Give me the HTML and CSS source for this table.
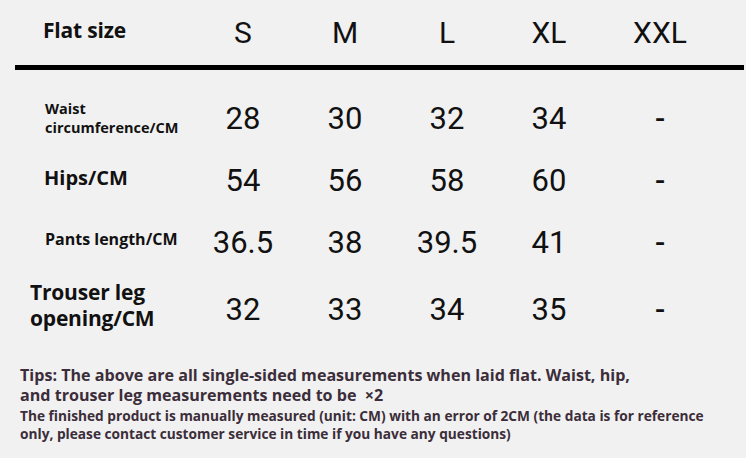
FILE: index.html
```html
<!DOCTYPE html>
<html>
<head>
<meta charset="utf-8">
<link rel="stylesheet" href="styles.css">
</head>
<body>
<div class="page">
  <div class="grid head">
    <div class="label flat">Flat size</div>
    <div class="size">S</div>
    <div class="size">M</div>
    <div class="size">L</div>
    <div class="size">XL</div>
    <div class="size">XXL</div>
  </div>
  <div class="rule"></div>
  <div class="body">
    <div class="grid row r1">
      <div class="label waist">Waist<br>circumference/CM</div>
      <div class="num">28</div>
      <div class="num">30</div>
      <div class="num">32</div>
      <div class="num">34</div>
      <div class="num dash">-</div>
    </div>
    <div class="grid row r2">
      <div class="label hips">Hips/CM</div>
      <div class="num">54</div>
      <div class="num">56</div>
      <div class="num">58</div>
      <div class="num">60</div>
      <div class="num dash">-</div>
    </div>
    <div class="grid row r3">
      <div class="label pants">Pants length/CM</div>
      <div class="num">36.5</div>
      <div class="num">38</div>
      <div class="num">39.5</div>
      <div class="num">41</div>
      <div class="num dash">-</div>
    </div>
    <div class="grid row r4">
      <div class="label trouser">Trouser leg<br>opening/CM</div>
      <div class="num">32</div>
      <div class="num">33</div>
      <div class="num">34</div>
      <div class="num">35</div>
      <div class="num dash">-</div>
    </div>
  </div>
  <div class="tips">
    <p class="tip-main">Tips: The above are all single-sided measurements when laid flat. Waist, hip,<br>and trouser leg measurements need to be &nbsp;×2</p>
    <p class="tip-note">The finished product is manually measured (unit: CM) with an error of 2CM (the data is for reference<br>only, please contact customer service in time if you have any questions)</p>
  </div>
</div>
</body>
</html>
```

FILE: styles.css
```css
html, body {
  margin: 0;
  padding: 0;
  background: #f1f1f1;
}
.page {
  width: 746px;
  height: 458px;
  overflow: hidden;
  color: #111;
}
.grid {
  display: grid;
  grid-template-columns: 192px 102px 102px 102px 102px 120px;
  align-items: center;
}
.head {
  height: 65px;
}
.label {
  font-family: "Open Sans", "Noto Sans", sans-serif;
  font-weight: 700;
  color: #111;
}
.flat {
  font-size: 21px;
  padding-left: 43px;
  padding-bottom: 6px;
  letter-spacing: -0.2px;
}
.size {
  font-family: Roboto, "Noto Sans", sans-serif;
  font-size: 30px;
  text-align: center;
  color: #111;
}
.rule {
  height: 5px;
  background: #000;
  margin-left: 15px;
  margin-right: 2px;
}
.body {
  padding-top: 17px;
}
.row {
  height: 62px;
}
.r4 {
  height: 72px;
}
.num {
  font-family: Roboto, "Noto Sans", sans-serif;
  font-size: 31px;
  text-align: center;
  color: #111;
}
.dash {
  font-size: 30px;
  font-weight: 500;
}
.waist {
  font-size: 14.5px;
  line-height: 19px;
  padding-left: 45px;
}
.hips {
  font-size: 20px;
  padding-left: 44px;
  padding-bottom: 6px;
}
.pants {
  font-size: 16px;
  padding-left: 45px;
  padding-bottom: 6px;
}
.trouser {
  font-size: 21px;
  line-height: 26px;
  padding-left: 30px;
  padding-bottom: 9px;
  letter-spacing: -0.2px;
}
.tips {
  padding-left: 20px;
  padding-top: 20px;
  font-family: "Open Sans", "Noto Sans", sans-serif;
  font-weight: 700;
  color: #3b2d39;
}
.tips p {
  margin: 0;
}
.tip-main {
  font-size: 16.1px;
  line-height: 20px;
}
.tip-note {
  font-size: 13.7px;
  line-height: 18px;
  padding-top: 2px;
}
```
